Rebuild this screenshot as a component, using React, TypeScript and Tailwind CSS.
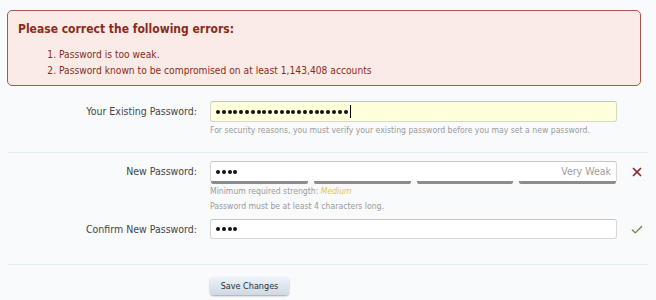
import { Check, X } from "lucide-react";

const FONT = "font-['DejaVu_Sans_Condensed','DejaVu_Sans',sans-serif]";

function Dots(props: { count: number }) {
  return (
    <div className="flex items-center gap-[1.8px]">
      {Array.from({ length: props.count }).map((_, i) => (
        <span key={i} className="h-[4px] w-[4px] rounded-full bg-[#111]" />
      ))}
    </div>
  );
}

function Meter() {
  return (
    <div className="grid grid-cols-4 gap-[6px] px-px">
      {[0, 1, 2, 3].map((i) => (
        <div key={i} className="h-[3px] rounded-b-[2px] bg-[#8c8c8c]" />
      ))}
    </div>
  );
}

function Row(props: { label: string; children: React.ReactNode; icon?: React.ReactNode }) {
  return (
    <div className="flex items-start">
      <div className="w-[189px] shrink-0 text-right text-[10.5px] leading-[21px] text-[#454545]">{props.label}</div>
      <div className="ml-[13px] w-[407px] shrink-0">{props.children}</div>
      <div className="ml-[12px] flex h-[21px] w-[16px] items-center justify-center">{props.icon}</div>
    </div>
  );
}

export default function App() {
  return (
    <div className={`${FONT} h-[300px] w-[656px] overflow-hidden bg-[#f9fafc] pt-[10px]`}>
      <div className="mx-[7px] h-[76px] w-[634px] rounded-[5px] border border-[#a9574c] bg-[#fbebe7] pl-[10px] pt-[10px] text-[#8a2c1c]">
        <div className="text-[12px] font-bold leading-[16px]">Please correct the following errors:</div>
        <ol className="mt-[10px] list-decimal pl-[41px] text-[10.2px] leading-[16px]">
          <li>Password is too weak.</li>
          <li>Password known to be compromised on at least 1,143,408 accounts</li>
        </ol>
      </div>

      <div className="mt-[15px] px-[8px]">
        <Row label="Your Existing Password:">
          <div className="flex h-[21px] items-center rounded-[3px] border border-[#d6d6cc] border-t-[#c4c4ba] bg-[#ffffdc] px-[5px]">
            <Dots count={23} />
            <span className="ml-[2px] h-[13px] w-px bg-black" />
          </div>
          <p className="mt-[2px] text-[8.6px] leading-[12px] text-[#9a9a9a]">
            For security reasons, you must verify your existing password before you may set a new password.
          </p>
        </Row>

        <div className="mt-[16px] h-px bg-[#e2eef4]" />

        <div className="mt-[8px]">
          <Row label="New Password:" icon={<X className="h-[14px] w-[14px] text-[#8e2a2a]" strokeWidth={3} />}>
            <div className="flex h-[20px] items-center justify-between rounded-t-[3px] border border-b-0 border-[#d6d6d6] border-t-[#c6c6c6] bg-white px-[5px]">
              <Dots count={4} />
              <span className="text-[10.5px] text-[#9e9e9e]">Very Weak</span>
            </div>
            <Meter />
            <p className="mt-[1px] text-[8.6px] leading-[12px] text-[#9a9a9a]">
              Minimum required strength: <span className="italic text-[#e5c44a]">Medium</span>
            </p>
            <p className="mt-[3px] text-[8.6px] leading-[12px] text-[#9a9a9a]">Password must be at least 4 characters long.</p>
          </Row>
        </div>

        <div className="mt-[7px]">
          <Row label="Confirm New Password:" icon={<Check className="h-[14px] w-[14px] text-[#5d8c3c]" strokeWidth={2.2} />}>
            <div className="flex h-[20px] items-center rounded-[3px] border border-[#d6d6d6] border-t-[#c6c6c6] bg-white px-[5px]">
              <Dots count={4} />
            </div>
          </Row>
        </div>

        <div className="mt-[24px] h-px bg-[#e2eef4]" />

        <div className="ml-[202px] mt-[12px] flex">
          <button className="h-[18px] w-[79px] rounded-[4px] bg-gradient-to-b from-[#eef3f8] to-[#cdd9e5] text-[9px] leading-[18px] text-[#2f2f2f] shadow-[0_1px_2px_rgba(0,0,0,0.35)]">
            Save Changes
          </button>
        </div>
      </div>
    </div>
  );
}
